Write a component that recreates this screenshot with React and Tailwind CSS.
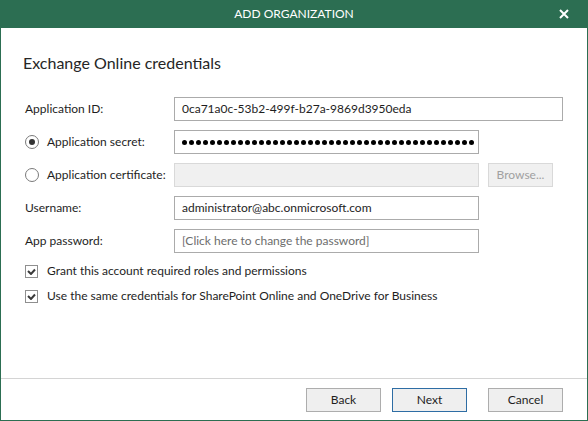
import React from 'react';

const font = { fontFamily: 'Lato, "Noto Sans", sans-serif' };

const Field = ({ children, className = '' }) => (
  <div className={`h-6 border border-[#ababab] bg-white px-[7px] flex items-center text-[12px] text-[#1e1e1e] ${className}`}>
    {children}
  </div>
);

const Radio = ({ checked }) => (
  <span className="w-[14px] h-[14px] rounded-full border border-[#7a7a7a] bg-white flex items-center justify-center mr-2 shrink-0">
    {checked && <span className="w-[6px] h-[6px] rounded-full bg-[#333]" />}
  </span>
);

const Check = () => (
  <span className="w-[13px] h-[13px] border border-[#8f8f8f] bg-white flex items-center justify-center mr-[9px] shrink-0">
    <svg width="9" height="7" viewBox="0 0 9 7">
      <path d="M1 3 L4 6 L8 1.5" fill="none" stroke="#3a3a3a" strokeWidth="2" />
    </svg>
  </span>
);

const Button = ({ children, primary }) => (
  <button
    className={`w-[75px] h-6 text-[12px] text-[#1e1e1e] bg-[#efefef] border ${primary ? 'border-[#2e6da4]' : 'border-[#adadad]'}`}
  >
    {children}
  </button>
);

export default function App() {
  return (
    <div style={font} className="w-[588px] h-[421px] flex flex-col bg-white border-x border-b border-[#2c6e52]">
      {/* title bar */}
      <div className="h-7 -mx-px bg-[#2c6e52] flex items-center justify-center relative shrink-0">
        <span className="text-white text-[12px]">ADD ORGANIZATION</span>
        <svg className="absolute right-[19px] top-[9px]" width="10" height="10" viewBox="0 0 10 10">
          <path d="M1 1 L9 9 M9 1 L1 9" stroke="#fff" strokeWidth="2" />
        </svg>
      </div>

      <div className="flex-1 pl-[22px] pr-6">
        <h1 className="text-[16px] text-[#262626] mt-[25px] mb-[24px] leading-5">Exchange Online credentials</h1>

        <div className="flex flex-col gap-[9px] text-[12px] text-[#1e1e1e]">
          <div className="flex items-center">
            <span className="w-[151px] pl-[2px]">Application ID:</span>
            <Field className="w-[389px]">0ca71a0c-53b2-499f-b27a-9869d3950eda</Field>
          </div>
          <div className="flex items-center">
            <span className="w-[151px] flex items-center pl-[2px]">
              <Radio checked />
              Application secret:
            </span>
            <Field className="w-[305px] gap-[2px]">
              {Array.from({ length: 42 }).map((_, i) => (
                <span key={i} className="w-[5px] h-[5px] rounded-full bg-black shrink-0" />
              ))}
            </Field>
          </div>
          <div className="flex items-center">
            <span className="w-[151px] flex items-center pl-[2px]">
              <Radio />
              Application certificate:
            </span>
            <div className="w-[305px] h-6 border border-[#d9d9d9] bg-[#f0f0f0]" />
            <button className="ml-[9px] w-[65px] h-6 border border-[#d9d9d9] bg-[#f0f0f0] text-[12px] text-[#a0a0a0]">
              Browse...
            </button>
          </div>
          <div className="flex items-center">
            <span className="w-[151px] pl-[2px]">Username:</span>
            <Field className="w-[305px]">administrator@abc.onmicrosoft.com</Field>
          </div>
          <div className="flex items-center">
            <span className="w-[151px] pl-[2px]">App password:</span>
            <Field className="w-[305px] text-[#6d6d6d]">[Click here to change the password]</Field>
          </div>
        </div>

        <div className="flex flex-col gap-[9px] mt-[10px] text-[12px] text-[#1e1e1e] pl-[2px]">
          <div className="flex items-center h-4">
            <Check />
            Grant this account required roles and permissions
          </div>
          <div className="flex items-center h-4">
            <Check />
            Use the same credentials for SharePoint Online and OneDrive for Business
          </div>
        </div>
      </div>

      <div className="h-[42px] border-t border-[#d4d4d4] flex items-start justify-end pt-[9px] pr-6 shrink-0">
        <Button>Back</Button>
        <span className="w-[11px]" />
        <Button primary>Next</Button>
        <span className="w-[21px]" />
        <Button>Cancel</Button>
      </div>
    </div>
  );
}
